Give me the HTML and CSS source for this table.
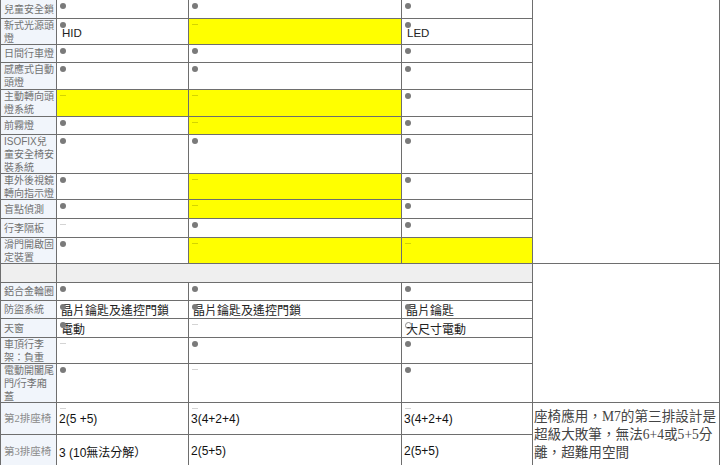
FILE: index.html
```html
<!DOCTYPE html>
<html lang="zh-Hant">
<head>
<meta charset="utf-8">
<title>規格比較</title>
<link rel="stylesheet" href="styles.css">
</head>
<body>
<div class="sheet">
  <div class="lbl">兒童安全鎖</div>
  <div class="cell dot"></div>
  <div class="cell dot"></div>
  <div class="cell dot"></div>
  <div class="side side-top"></div>

  <div class="lbl">新式光源頭燈</div>
  <div class="cell dot"><span class="wide">HID</span></div>
  <div class="cell y dash"></div>
  <div class="cell dot"><span class="wide">LED</span></div>

  <div class="lbl">日間行車燈</div>
  <div class="cell dot"></div>
  <div class="cell dot"></div>
  <div class="cell dot"></div>

  <div class="lbl">感應式自動頭燈</div>
  <div class="cell dot"></div>
  <div class="cell dot"></div>
  <div class="cell dot"></div>

  <div class="lbl">主動轉向頭燈系統</div>
  <div class="cell y dash"></div>
  <div class="cell y dash"></div>
  <div class="cell dot"></div>

  <div class="lbl">前霧燈</div>
  <div class="cell dot"></div>
  <div class="cell y dash"></div>
  <div class="cell dot"></div>

  <div class="lbl">ISOFIX兒童安全椅安裝系統</div>
  <div class="cell dot"></div>
  <div class="cell dot"></div>
  <div class="cell dot"></div>

  <div class="lbl">車外後視鏡轉向指示燈</div>
  <div class="cell dot"></div>
  <div class="cell y dash"></div>
  <div class="cell dot"></div>

  <div class="lbl">盲點偵測</div>
  <div class="cell dot"></div>
  <div class="cell y dash"></div>
  <div class="cell dot"></div>

  <div class="lbl">行李隔板</div>
  <div class="cell dash"></div>
  <div class="cell dot"></div>
  <div class="cell dot"></div>

  <div class="lbl">滑門開啟固定裝置</div>
  <div class="cell dot"></div>
  <div class="cell y dash"></div>
  <div class="cell y dash"></div>

  <div class="lbl gray"></div>
  <div class="band gray"></div>
  <div class="side side-mid"></div>

  <div class="lbl">鋁合金輪圈</div>
  <div class="cell dot"></div>
  <div class="cell dot"></div>
  <div class="cell dot"></div>

  <div class="lbl">防盜系統</div>
  <div class="cell dot">晶片鑰匙及遙控門鎖</div>
  <div class="cell dot">晶片鑰匙及遙控門鎖</div>
  <div class="cell dot">晶片鑰匙</div>

  <div class="lbl">天窗</div>
  <div class="cell dot">電動</div>
  <div class="cell dash"></div>
  <div class="cell ring">大尺寸電動</div>

  <div class="lbl">車頂行李架：負重</div>
  <div class="cell dash"></div>
  <div class="cell dot"></div>
  <div class="cell dot"></div>

  <div class="lbl">電動開闔尾門/行李廂蓋</div>
  <div class="cell dot"></div>
  <div class="cell dash"></div>
  <div class="cell dot"></div>

  <div class="lbl serif">第2排座椅</div>
  <div class="cell dash num">2(5 +5)</div>
  <div class="cell dash num">3(4+2+4)</div>
  <div class="cell dash num">3(4+2+4)</div>
  <div class="side side-note">座椅應用，M7的第三排設計是超級大敗筆，無法6+4或5+5分離，超難用空間</div>

  <div class="lbl serif">第3排座椅</div>
  <div class="cell num">3 (10無法分解）</div>
  <div class="cell num">2(5+5)</div>
  <div class="cell num">2(5+5)</div>
</div>
</body>
</html>
```

FILE: styles.css
```css
html, body {
  margin: 0;
  padding: 0;
  background: #fff;
}

body {
  font-family: "Liberation Sans", "Noto Sans CJK TC", sans-serif;
  overflow: hidden;
}

.sheet {
  display: grid;
  grid-template-columns: 55px 131px 212px 130px 186px;
  grid-template-rows: 18px 25px 17px 26px 26px 17px 38px 25px 18px 18px 25px 18px 17px 17px 18px 25px 38px 31px 32px;
  gap: 1px;
  padding: 0 1px 1px 1px;
  width: 720px;
  box-sizing: border-box;
  background: #6e6e6e;
}

.lbl {
  background: #f1f5fb;
  color: #727272;
  font-size: 10px;
  line-height: 13px;
  padding: 0 1px 0 3px;
  display: flex;
  align-items: center;
  overflow: visible;
}

.lbl.serif {
  font-family: "Liberation Serif", "Noto Sans CJK TC", serif;
  color: #8a8a8a;
  font-size: 10.5px;
}

.gray {
  background: #efefef;
}

.band {
  grid-column: 2 / span 3;
}

.cell {
  position: relative;
  background: #fff;
  display: flex;
  align-items: center;
  padding-left: 4px;
  font-size: 12px;
  color: #222;
  white-space: nowrap;
}

.cell.y {
  background: #ffff00;
}

.cell.num {
  padding-left: 2px;
  color: #111;
}

.wide {
  padding-left: 1px;
  padding-top: 3px;
  font-size: 11.5px;
}

.dot::before,
.dash::before,
.ring::before {
  content: "";
  position: absolute;
  left: 3px;
}

.dot::before {
  top: 3px;
  width: 6px;
  height: 6px;
  border-radius: 50%;
  background: #7a7a7a;
}

.dash::before {
  top: 5px;
  width: 6px;
  height: 1px;
  background: rgba(0, 0, 0, 0.17);
}

.ring::before {
  top: 3px;
  width: 5px;
  height: 5px;
  border-radius: 50%;
  border: 1px solid #8a8a8a;
}

.side {
  grid-column: 5;
  background: #fff;
}

.side-top {
  grid-row: span 11;
}

.side-mid {
  grid-row: span 6;
}

.side-note {
  grid-row: span 2;
  display: flex;
  align-items: center;
  padding: 0 0 0 1px;
  font-family: "Liberation Serif", "Noto Sans CJK TC", serif;
  font-size: 13.6px;
  line-height: 18px;
  color: #444;
}
```
